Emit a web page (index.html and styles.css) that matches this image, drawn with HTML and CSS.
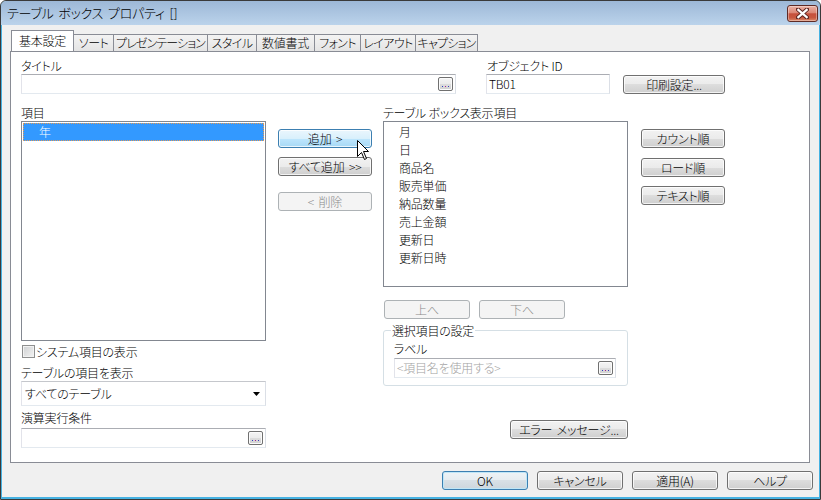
FILE: index.html
```html
<!DOCTYPE html>
<html lang="ja">
<head>
<meta charset="utf-8">
<title>テーブル ボックス プロパティ</title>
<link rel="stylesheet" href="styles.css">
</head>
<body>
<div class="window">
  <div class="titlebar">
    <span class="title">テーブル ボックス プロパティ []</span>
    <div class="close">
      <svg width="13" height="11" viewBox="0 0 13 11"><path d="M2 1.5 L11 9.5 M11 1.5 L2 9.5" stroke="#5b2420" stroke-width="4.2" stroke-linecap="round"/><path d="M2.3 1.8 L10.7 9.2 M10.7 1.8 L2.3 9.2" stroke="#ffffff" stroke-width="2.2" stroke-linecap="square"/></svg>
    </div>
  </div>
  <div class="body">
    <div class="tabs">
      <div class="tab active">基本設定</div>
      <div class="tab t2">ソート</div>
      <div class="tab t3">プレゼンテーション</div>
      <div class="tab t4">スタイル</div>
      <div class="tab t5">数値書式</div>
      <div class="tab t6">フォント</div>
      <div class="tab t7">レイアウト</div>
      <div class="tab t8">キャプション</div>
    </div>
    <div class="panel">
      <div class="toprow">
        <div class="f-title">
          <div class="lbl">タイトル</div>
          <div class="textbox">
            <span class="val"></span>
            <span class="dots"><svg width="11" height="2" viewBox="0 0 11 2"><rect x="2" y="0" width="1" height="1" fill="#2b3fc4"/><rect x="5" y="0" width="1" height="1" fill="#b0208a"/><rect x="8" y="0" width="1" height="1" fill="#3340c0"/></svg></span>
          </div>
        </div>
        <div class="f-id">
          <div class="lbl ind">オブジェクト ID</div>
          <div class="textbox"><span class="val">TB01</span></div>
        </div>
        <div class="btn btn-print">印刷設定...</div>
      </div>

      <div class="main">
        <div class="col col-a">
          <div class="lbl">項目</div>
          <div class="listbox list-a">
            <div class="row selected">年</div>
          </div>
          <div class="checkrow"><span class="check"></span><span>システム項目の表示</span></div>
          <div class="lbl l-show">テーブルの項目を表示</div>
          <div class="combo"><span>すべてのテーブル</span><svg width="7" height="4" viewBox="0 0 7 4"><polygon points="0,0 7,0 3.5,4" fill="#000"/></svg></div>
          <div class="lbl l-cond">演算実行条件</div>
          <div class="textbox tb-cond">
            <span class="val"></span>
            <span class="dots"><svg width="11" height="2" viewBox="0 0 11 2"><rect x="2" y="0" width="1" height="1" fill="#2b3fc4"/><rect x="5" y="0" width="1" height="1" fill="#b0208a"/><rect x="8" y="0" width="1" height="1" fill="#3340c0"/></svg></span>
          </div>
        </div>

        <div class="col col-b">
          <div class="btn-wrap">
            <div class="btn hover">追加 &gt;</div>
            <svg class="cursor" width="13" height="21" viewBox="0 0 13 21"><path d="M0.5 0.5 L0.5 16.5 L4.5 12.5 L7.5 19.5 L9.5 18.5 L6.5 11.5 L11.5 11.5 Z" fill="#fff" stroke="#000" stroke-width="1" stroke-linejoin="miter"/></svg>
          </div>
          <div class="btn b-all">すべて追加 &gt;&gt;</div>
          <div class="btn disabled b-del">&lt; 削除</div>
        </div>

        <div class="col col-c">
          <div class="lbl">テーブル ボックス表示項目</div>
          <div class="listbox list-c">
            <div class="row">月</div>
            <div class="row">日</div>
            <div class="row">商品名</div>
            <div class="row">販売単価</div>
            <div class="row">納品数量</div>
            <div class="row">売上金額</div>
            <div class="row">更新日</div>
            <div class="row">更新日時</div>
          </div>
          <div class="updown">
            <div class="btn disabled">上へ</div>
            <div class="btn disabled">下へ</div>
          </div>
          <fieldset class="group">
            <legend>選択項目の設定</legend>
            <div class="lbl">ラベル</div>
            <div class="textbox tb-label">
              <span class="val placeholder">&lt;項目名を使用する&gt;</span>
              <span class="dots"><svg width="11" height="2" viewBox="0 0 11 2"><rect x="2" y="0" width="1" height="1" fill="#2b3fc4"/><rect x="5" y="0" width="1" height="1" fill="#b0208a"/><rect x="8" y="0" width="1" height="1" fill="#3340c0"/></svg></span>
            </div>
          </fieldset>
          <div class="btn b-err">エラー メッセージ...</div>
        </div>

        <div class="col col-d">
          <div class="btn">カウント順</div>
          <div class="btn b-load">ロード順</div>
          <div class="btn b-text">テキスト順</div>
        </div>
      </div>
    </div>

    <div class="footer">
      <div class="btn default">OK</div>
      <div class="btn">キャンセル</div>
      <div class="btn">適用(A)</div>
      <div class="btn">ヘルプ</div>
    </div>
  </div>
</div>
</body>
</html>
```
FILE: styles.css
```css
* { box-sizing: border-box; }
html, body { margin: 0; padding: 0; background: #ffffff; }
body {
  font-family: "Noto Sans CJK JP", "Noto Sans", sans-serif;
  font-size: 12px;
  font-weight: 300;
  color: #000;
  font-feature-settings: "palt";
  letter-spacing: -0.2px;
}

.window {
  width: 821px;
  height: 500px;
  border: 1px solid #3a3a3a;
  border-radius: 6px 6px 0 0;
  background: #f0f0f0;
  box-shadow: inset 1px 0 0 #46b2e2, inset -1px 0 0 #46b2e2, inset 0 -2px 0 #46b2e2;
  overflow: hidden;
}

.titlebar {
  height: 24px;
  display: flex;
  justify-content: space-between;
  align-items: flex-start;
  padding-left: 6px;
  background: linear-gradient(#9db8d7, #bbd3eb);
  border-radius: 5px 5px 0 0;
}
.title {
  font-size: 13px;
  line-height: 24px;
  letter-spacing: -0.2px;
  word-spacing: 2px;
}
.close {
  width: 31px;
  height: 17px;
  margin-top: 4px;
  margin-right: 2px;
  border: 1px solid #5e2a25;
  border-radius: 3px;
  background: linear-gradient(#eab1a4 0%, #dc8876 45%, #c6503c 52%, #c8583f 78%, #dc8a6a 100%);
  box-shadow: inset 0 0 0 1px rgba(255, 255, 255, 0.35);
  display: flex;
  align-items: center;
  justify-content: center;
}

.body {
  padding: 6px 9px 0 9px;
}

.tabs {
  display: flex;
  align-items: flex-end;
  height: 20px;
  margin-left: 1px;
  position: relative;
  z-index: 1;
}
.tab {
  height: 17px;
  border: 1px solid #898c95;
  border-bottom: none;
  margin-left: -1px;
  background: linear-gradient(#f3f3f3, #e4e4e4);
  text-align: center;
  line-height: 15px;
  white-space: nowrap;
  letter-spacing: -0.6px;
}
.tab.active {
  height: 21px;
  width: 63px;
  margin-left: 0;
  background: #ffffff;
  line-height: 19px;
  position: relative;
  z-index: 2;
  letter-spacing: -0.2px;
}
.t2 { width: 41px; }
.t3 { width: 95px; letter-spacing: -0.9px; }
.t4 { width: 50px; }
.t5 { width: 59px; letter-spacing: -0.2px; }
.t6 { width: 47px; }
.t7 { width: 56px; }
.t8 { width: 63px; letter-spacing: -0.8px; }

.panel {
  width: 800px;
  height: 412px;
  border: 1px solid #898c95;
  background: #ffffff;
  padding: 6px 0 0 10px;
}

.lbl {
  height: 15px;
  line-height: 15px;
  margin-bottom: 1px;
  white-space: nowrap;
}
.lbl.ind { padding-left: 1px; }

.toprow {
  display: flex;
  align-items: flex-start;
}
.f-title { width: 435px; }
.f-id { width: 124px; margin-left: 30px; }
.btn-print { width: 102px; margin-left: 13px; margin-top: 17px; }

.textbox {
  height: 20px;
  border: 1px solid;
  border-color: #abadb3 #dbdfe6 #e3e9ef #e2e3ea;
  background: #fff;
  display: flex;
  align-items: center;
  justify-content: space-between;
  padding: 0 2px 0 2px;
}
.textbox .val {
  line-height: 18px;
  white-space: nowrap;
}
.placeholder { color: #a3a3a3; }

.dots {
  width: 15px;
  height: 14px;
  border: 1px solid #707070;
  border-radius: 2px;
  background: linear-gradient(#f4f4f4 0%, #ebebeb 50%, #dddddd 50%, #d0d0d0 100%);
  box-shadow: inset 0 0 0 1px #fbfbfb;
  display: flex;
  align-items: flex-end;
  justify-content: center;
  padding-bottom: 2px;
}
.dots svg { display: block; }

.btn {
  height: 19px;
  border: 1px solid #707070;
  border-radius: 3px;
  background: linear-gradient(#f2f2f2 0%, #ebebeb 50%, #dddddd 50%, #cfcfcf 100%);
  box-shadow: inset 0 0 0 1px rgba(255, 255, 255, 0.75);
  text-align: center;
  line-height: 17px;
  white-space: nowrap;
  word-spacing: 2px;
}
.btn.hover {
  border-color: #3c7fb1;
  background: linear-gradient(#eaf6fd 0%, #d9f0fc 50%, #bee6fd 50%, #a7d9f5 100%);
}
.btn.disabled {
  border-color: #adb2b5;
  background: #f4f4f4;
  color: #8a8a8a;
  box-shadow: none;
}
.btn.default {
  border-color: #3c7fb1;
  box-shadow: inset 0 0 0 1px #bfe6f7;
  background: linear-gradient(#eef3f6 0%, #e6ecf0 50%, #d8e0e6 50%, #cdd6dd 100%);
}

.main {
  display: flex;
  align-items: flex-start;
  margin-top: 11px;
}
.col { display: flex; flex-direction: column; }
.col-a { width: 245px; }
.col-b { width: 94px; margin-left: 12px; padding-top: 24px; }
.col-c { width: 245px; margin-left: 11px; }
.col-d { width: 84px; margin-left: 13px; padding-top: 24px; }

.listbox {
  border: 1px solid #828790;
  background: #fff;
  padding: 1px;
}
.list-a { height: 220px; }
.list-c { height: 166px; }
.row {
  height: 18px;
  line-height: 18px;
  white-space: nowrap;
}
.list-a .row { padding-left: 16px; }
.list-c .row { padding-left: 14px; }
.row.selected {
  background: #3399ff;
  color: #ffffff;
  outline: 1px dotted #e49a55;
  outline-offset: -1px;
}

.checkrow {
  display: flex;
  align-items: center;
  height: 15px;
  line-height: 15px;
  margin-top: 3px;
}
.check {
  width: 13px;
  height: 13px;
  margin-left: 1px;
  margin-right: 1px;
  border: 1px solid #8e8f8f;
  background: linear-gradient(135deg, #cfd1d3, #f3f3f3);
  box-shadow: inset 0 0 0 1px #f2f2f2;
}
.l-show { margin-top: 6px; }
.combo {
  height: 25px;
  border: 1px solid;
  border-color: #c5c7cc #dbdfe6 #e3e9ef #e2e3ea;
  background: #fff;
  display: flex;
  align-items: center;
  justify-content: space-between;
  padding: 0 5px 0 3px;
}
.l-cond { margin-top: 4px; margin-bottom: 3px; }

.btn-wrap { position: relative; }
.cursor { position: absolute; left: 79px; top: 11px; }
.b-all { margin-top: 9px; }
.b-del { margin-top: 16px; }

.updown {
  display: flex;
  margin-top: 13px;
  padding-left: 1px;
}
.updown .btn { width: 86px; }
.updown .btn + .btn { margin-left: 9px; }

.group {
  margin: 4px 0 0 0;
  padding: 3px 11px 7px 10px;
  border: 1px solid #d5dfe5;
  border-radius: 3px;
  min-width: 0;
}
.group legend {
  padding: 0 1px;
  margin-left: -3px;
  line-height: 15px;
  height: 15px;
}
.group .lbl { margin-bottom: 2px; }

.b-err { width: 118px; align-self: flex-end; margin-top: 34px; }

.b-load { margin-top: 10px; }
.b-text { margin-top: 9px; }

.footer {
  display: flex;
  justify-content: flex-end;
  margin-top: 8px;
  margin-right: -2px;
}
.footer .btn { width: 86px; margin-left: 9px; }
```
